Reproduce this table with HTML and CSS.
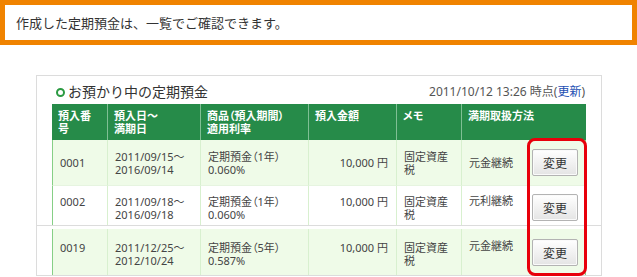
FILE: index.html
```html
<!DOCTYPE html>
<html lang="ja">
<head>
<meta charset="utf-8">
<title>定期預金一覧</title>
<link rel="stylesheet" href="styles.css">
</head>
<body>
<div class="notice">
  <p>作成した定期預金は、一覧でご確認できます。</p>
</div>
<section class="panel">
  <div class="panel-head">
    <h2 class="title"><span class="ring"></span>お預かり中の定期預金</h2>
    <p class="stamp">2011/10/12 13:26 時点(<a class="refresh" href="#">更新</a>)</p>
  </div>
  <div class="part part-top">
    <div class="row head">
      <div class="cell">預入番号</div>
      <div class="cell">預入日～<br>満期日</div>
      <div class="cell">商品（預入期間）<br>適用利率</div>
      <div class="cell">預入金額</div>
      <div class="cell">メモ</div>
      <div class="cell">満期取扱方法</div>
    </div>
    <div class="row body tinted">
      <div class="cell">0001</div>
      <div class="cell">2011/09/15～<br>2016/09/14</div>
      <div class="cell">定期預金（1年）<br>0.060%</div>
      <div class="cell amount">10,000 円</div>
      <div class="cell">固定資産税</div>
      <div class="cell method"><span>元金継続</span><button class="btn" type="button">変更</button></div>
    </div>
    <div class="row body plain cut">
      <div class="cell">0002</div>
      <div class="cell">2011/09/18～<br>2016/09/18</div>
      <div class="cell">定期預金（1年）<br>0.060%</div>
      <div class="cell amount">10,000 円</div>
      <div class="cell">固定資産税</div>
      <div class="cell method"><span>元利継続</span><button class="btn" type="button">変更</button></div>
    </div>
  </div>
  <div class="part part-bottom">
    <div class="row body tinted low">
      <div class="cell">0019</div>
      <div class="cell">2011/12/25～<br>2012/10/24</div>
      <div class="cell">定期預金（5年）<br>0.587%</div>
      <div class="cell amount">10,000 円</div>
      <div class="cell">固定資産税</div>
      <div class="cell method"><span>元金継続</span><button class="btn" type="button">変更</button></div>
    </div>
  </div>
  <div class="highlight"></div>
</section>
</body>
</html>
```
FILE: styles.css
```css
html, body {
  margin: 0;
  padding: 0;
  background: #fff;
}
body {
  font-family: "Noto Sans", "Noto Sans CJK JP", sans-serif;
  color: #333;
}
.notice {
  box-sizing: border-box;
  height: 45px;
  border: 5px solid #f08300;
  display: flex;
  align-items: center;
  padding-left: 11px;
}
.notice p {
  margin: 0;
  font-size: 13px;
  color: #333;
}
.panel {
  position: relative;
  box-sizing: border-box;
  width: 566px;
  height: 201px;
  margin: 30px 0 0 36px;
  border: 1px solid #dcdcdc;
}
.panel-head {
  height: 28px;
  padding: 0 15px;
  display: flex;
  align-items: center;
  justify-content: space-between;
}
.title {
  margin: 2px 0 0 4px;
  font-size: 14px;
  font-weight: normal;
  color: #333;
  display: flex;
  align-items: center;
}
.ring {
  box-sizing: border-box;
  width: 9px;
  height: 9px;
  border: 2.5px solid #2b9a42;
  border-radius: 50%;
  margin-right: 3px;
  margin-top: 2px;
}
.stamp {
  margin: 2px 1px 0 0;
  font-size: 12px;
  color: #555;
}
.refresh {
  color: #1d4fb3;
  text-decoration: none;
}
.part {
  padding: 0 15px;
}
.part-top {
  border-bottom: 1px solid #dcdcdc;
}
.part-bottom {
  padding-top: 3px;
}
.row {
  display: grid;
  grid-template-columns: 56px 93px 108px 88px 65px 124px;
}
.head {
  background: #268b49;
  height: 36px;
  color: #fff;
  font-weight: bold;
  font-size: 11px;
  line-height: 13px;
  font-feature-settings: "palt";
}
.head .cell {
  padding: 5px 8px 0 6px;
  border-right: 1px solid #7fbf94;
}
.head .cell:last-child {
  border-right: none;
}
.body {
  font-size: 11px;
  line-height: 13px;
  color: #444;
  height: 46px;
  font-feature-settings: "palt";
}
.body .cell {
  display: flex;
  align-items: center;
  padding: 0 6px 0 7px;
  border-right: 1px solid #d8f0cf;
  border-bottom: 1px solid #e6f4e0;
}
.body .cell:first-child {
  border-left: 1px solid #86cf86;
}
.body .cell:last-child {
  border-right: 1px solid #86cf86;
}
.tinted .cell {
  background: #effbe8;
}
.plain .cell {
  background: #fff;
}
.cut {
  height: 39px;
}
.cut .cell {
  align-items: flex-start;
  padding-top: 9px;
  border-bottom: none;
}
.low .cell {
  align-items: flex-start;
  padding-top: 12px;
  border-bottom: none;
}
.cell.amount {
  justify-content: flex-end;
  padding-right: 8px;
}
.cell.method {
  justify-content: space-between;
  padding-right: 7px;
}
.cut .cell.method {
  padding-top: 8px;
}
.low .cell.method {
  padding-top: 10px;
}
.btn {
  box-sizing: border-box;
  width: 46px;
  height: 27px;
  padding: 0;
  border: 1px solid #b3b3b3;
  border-radius: 2px;
  background: linear-gradient(#ffffff, #e4e4e4);
  font-family: "Noto Sans CJK JP", sans-serif;
  font-size: 12px;
  color: #333;
  box-shadow: inset 0 0 0 1px #fafafa;
}
.highlight {
  position: absolute;
  left: 490px;
  top: 62px;
  box-sizing: border-box;
  width: 60px;
  height: 138px;
  border: 3px solid #e8000b;
  border-radius: 8px;
  pointer-events: none;
}
```
